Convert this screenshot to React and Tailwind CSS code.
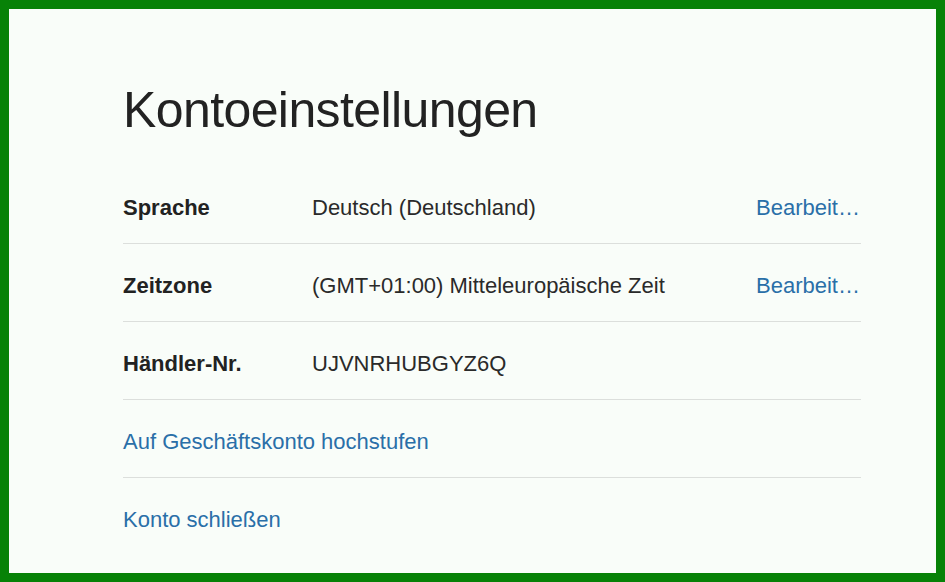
import React from 'react'

const rows = [
  { label: 'Sprache', value: 'Deutsch (Deutschland)', edit: true },
  { label: 'Zeitzone', value: '(GMT+01:00) Mitteleuropäische Zeit', edit: true },
  { label: 'Händler-Nr.', value: 'UJVNRHUBGYZ6Q', edit: false },
]

const links = ['Auf Geschäftskonto hochstufen', 'Konto schließen']

export default function App() {
  return (
    <div
      className="h-[582px] w-full bg-[#078207] p-[9px]"
      style={{ fontFamily: '"Liberation Sans", Arial, sans-serif' }}
    >
      <div className="h-full w-full bg-[#f9fdf9] pl-[114px] pr-[75px] pt-[76px]">
        <h1 className="text-[50px] leading-[50px] tracking-[-0.6px] text-[#222]">Kontoeinstellungen</h1>

        <div className="mt-[31px]">
          {rows.map((r) => (
            <div key={r.label} className="flex h-[78px] items-center border-b border-[#dcdfdc] pt-[5px]">
              <div className="w-[189px] text-[22px] font-bold text-[#222]">{r.label}</div>
              <div className="flex-1 text-[22px] text-[#2a2a2a]">{r.value}</div>
              {r.edit ? (
                <div className="w-[105px] truncate text-[22px] text-[#2a6fa8]">Bearbeiten</div>
              ) : null}
            </div>
          ))}
          {links.map((l, i) => (
            <div
              key={l}
              className={`flex h-[78px] items-center pt-[5px] ${i < links.length - 1 ? 'border-b border-[#dcdfdc]' : ''}`}
            >
              <span className="text-[22px] text-[#2a6fa8]">{l}</span>
            </div>
          ))}
        </div>
      </div>
    </div>
  )
}
